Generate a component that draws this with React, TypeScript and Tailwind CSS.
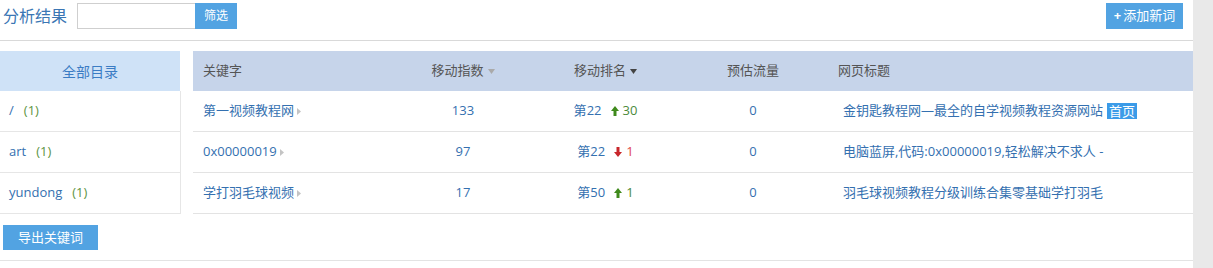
const rows = [
  { kw: '第一视频教程网', idx: 133, rank: 22, dir: 'up', delta: 30, flow: 0, title: '金钥匙教程网—最全的自学视频教程资源网站', home: true },
  { kw: '0x00000019', idx: 97, rank: 22, dir: 'down', delta: 1, flow: 0, title: '电脑蓝屏,代码:0x00000019,轻松解决不求人 -', home: false },
  { kw: '学打羽毛球视频', idx: 17, rank: 50, dir: 'up', delta: 1, flow: 0, title: '羽毛球视频教程分级训练合集零基础学打羽毛', home: false },
]

const dirs = [
  { name: '/', count: 1 },
  { name: 'art', count: 1 },
  { name: 'yundong', count: 1 },
]

const Caret = ({ dark }: { dark?: boolean }) => (
  <svg width="7" height="5" viewBox="0 0 7 5" className="ml-[4px] inline-block">
    <path d="M0 0h7L3.5 5z" fill={dark ? '#444' : '#aaa'} />
  </svg>
)

const Arrow = ({ up }: { up: boolean }) => (
  <svg width="8" height="10" viewBox="0 0 8 10" className="inline-block">
    {up ? (
      <path d="M4 0L8 5H5.5V10H2.5V5H0z" fill="#3f8a1c" />
    ) : (
      <path d="M4 10L8 5H5.5V0H2.5V5H0z" fill="#c8262b" />
    )}
  </svg>
)

const App = () => {
  return (
    <div className="flex w-[1213px] h-[268px] bg-white text-[13px] font-['Open_Sans','Noto_Sans_CJK_SC',sans-serif] overflow-hidden">
      <div className="w-[1193px] flex flex-col">
        <div className="h-[41px] border-b border-[#d9d9d9] flex items-start pt-[3px] pl-[3px] pr-[10px]">
          <span className="text-[16px] leading-[26px] text-[#3b76b4] mr-[10px]">分析结果</span>
          <input className="w-[118px] h-[26px] border border-[#cfcfcf] border-r-0 outline-none px-1" />
          <button className="h-[26px] w-[42px] bg-[#52a3e2] text-white text-[12px]">筛选</button>
          <button className="ml-auto h-[26px] w-[77px] bg-[#52a3e2] text-white text-[13px] flex items-center justify-center">
            <span className="font-bold mr-[2px]">+</span>添加新词
          </button>
        </div>

        <div className="flex mt-[10px] items-start">
          <div className="w-[181px]">
            <div className="h-[40px] w-[180px] bg-[#cfe2f7] text-[#3b7cc4] text-[14px] flex items-center justify-center">全部目录</div>
            {dirs.map((d) => (
              <div key={d.name} className="h-[41px] border-b border-r border-[#e6e6e6] flex items-center pl-[9px] text-[#3470b0]">
                {d.name}
                <span className="ml-[10px] text-[#5d9443]">({d.count})</span>
              </div>
            ))}
          </div>

          <div className="ml-[12px] flex-1">
            <div className="h-[40px] bg-[#c6d4ea] grid grid-cols-[200px_140px_145px_150px_1fr] items-center text-[#555]">
              <div className="pl-[10px]">关键字</div>
              <div className="text-center">移动指数<Caret /></div>
              <div className="text-center">移动排名<Caret dark /></div>
              <div className="text-center">预估流量</div>
              <div className="pl-[10px]">网页标题</div>
            </div>
            {rows.map((r) => (
              <div key={r.kw} className="h-[41px] border-b border-[#e3e3e3] grid grid-cols-[200px_140px_145px_150px_1fr] items-center text-[#3470b0]">
                <div className="pl-[10px] flex items-center">
                  {r.kw}
                  <svg width="4" height="7" viewBox="0 0 4 7" className="ml-[3px]"><path d="M0 0L4 3.5 0 7z" fill="#c4c4c4" /></svg>
                </div>
                <div className="text-center">{r.idx}</div>
                <div className="flex items-center justify-center">
                  <span>第{r.rank}</span>
                  <span className="ml-[9px] flex"><Arrow up={r.dir === 'up'} /></span>
                  <span className={r.dir === 'up' ? 'ml-[4px] text-[#4b8a3a]' : 'ml-[4px] text-[#e0474c]'}>{r.delta}</span>
                </div>
                <div className="text-center">{r.flow}</div>
                <div className="pl-[15px] flex items-center">
                  {r.title}
                  {r.home && <span className="ml-[4px] px-[2px] bg-[#3b9be8] text-white leading-[16px]">首页</span>}
                </div>
              </div>
            ))}
          </div>
        </div>

        <div className="mt-[11px] pl-[3px]">
          <button className="h-[25px] w-[95px] bg-[#52a3e2] text-white text-[13px]">导出关键词</button>
        </div>
        <div className="mt-[10px] border-b border-[#e3e3e3]" />
      </div>
      <div className="w-[20px] h-full bg-[#e9e9e9]" />
    </div>
  )
}

export default App
